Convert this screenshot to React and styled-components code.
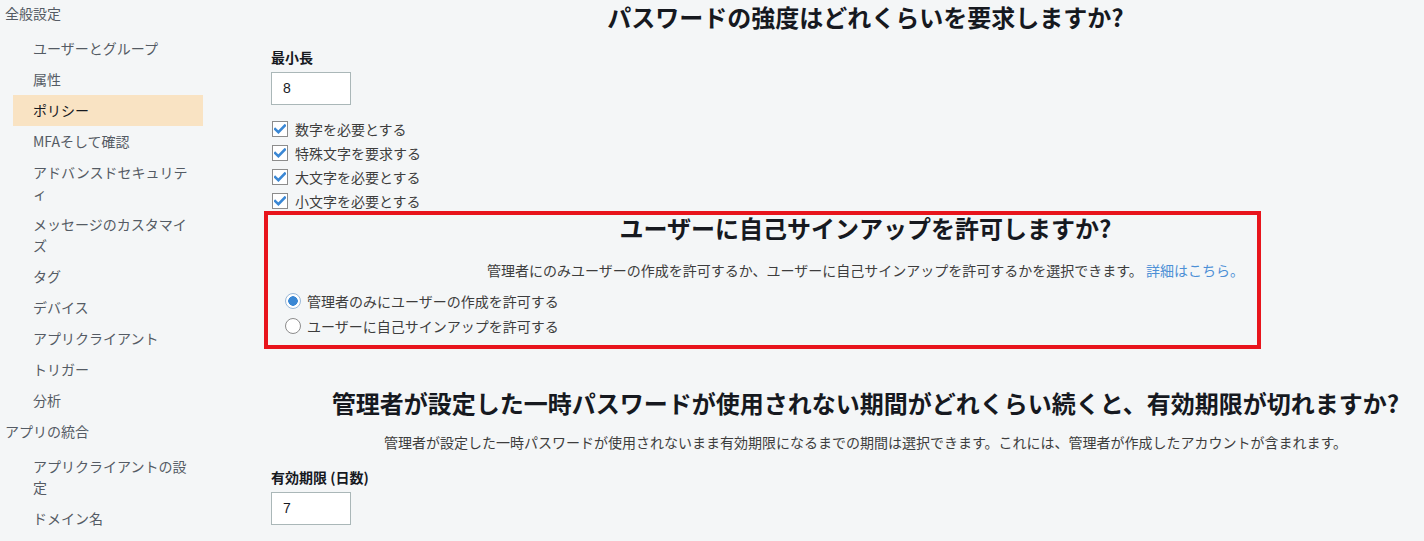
import styled, { createGlobalStyle } from 'styled-components';

const GlobalStyle = createGlobalStyle`
  html, body {
    margin: 0;
    padding: 0;
    background: #f4f6f7;
    overflow: hidden;
  }
  body {
    font-family: "Noto Sans CJK JP", "Noto Sans", sans-serif;
    color: #333;
  }
`;

const navGroups = [
  {
    title: '全般設定',
    items: ['ユーザーとグループ', '属性', 'ポリシー', 'MFAそして確認', 'アドバンスドセキュリティ', 'メッセージのカスタマイズ', 'タグ', 'デバイス', 'アプリクライアント', 'トリガー', '分析'],
  },
  {
    title: 'アプリの統合',
    items: ['アプリクライアントの設定', 'ドメイン名'],
  },
];

const checks = ['数字を必要とする', '特殊文字を要求する', '大文字を必要とする', '小文字を必要とする'];

const Check = () => (
  <svg width="12" height="10" viewBox="0 0 12 10">
    <path d="M1.2 5.2 L4.4 8.2 L10.8 1.6" fill="none" stroke="#3a87d4" strokeWidth="2.6" strokeLinecap="square" />
  </svg>
);

const App = () => {
  return (
    <Page>
      <GlobalStyle />
      <Sidebar>
        {navGroups.map(group => (
          <div key={group.title}>
            <GroupTitle>{group.title}</GroupTitle>
            <NavList>
              {group.items.map(item => (
                <NavItem key={item} active={item === 'ポリシー'}>{item}</NavItem>
              ))}
            </NavList>
          </div>
        ))}
      </Sidebar>

      <Main>
        <Heading>パスワードの強度はどれくらいを要求しますか?</Heading>
        <Label top="13px">最小長</Label>
        <NumberBox>8</NumberBox>
        <CheckList>
          {checks.map(c => (
            <OptionRow key={c}>
              <CheckBox><Check /></CheckBox>
              {c}
            </OptionRow>
          ))}
        </CheckList>

        <Section>
          <Highlight />
          <Heading lineHeight="30px">ユーザーに自己サインアップを許可しますか?</Heading>
          <Description top="17px">
            管理者にのみユーザーの作成を許可するか、ユーザーに自己サインアップを許可するかを選択できます。 <Link>詳細はこちら。</Link>
          </Description>
          <RadioList>
            <OptionRow height="25px" gap="6px">
              <Radio checked />
              管理者のみにユーザーの作成を許可する
            </OptionRow>
            <OptionRow height="25px" gap="6px">
              <Radio />
              ユーザーに自己サインアップを許可する
            </OptionRow>
          </RadioList>
        </Section>

        <Heading top="47px">管理者が設定した一時パスワードが使用されない期間がどれくらい続くと、有効期限が切れますか?</Heading>
        <Description top="12px">
          管理者が設定した一時パスワードが使用されないまま有効期限になるまでの期間は選択できます。これには、管理者が作成したアカウントが含まれます。
        </Description>
        <Label top="15px">有効期限 (日数)</Label>
        <NumberBox>7</NumberBox>
      </Main>
    </Page>
  );
};

export default App;

const Page = styled.div`
  display: flex;
  width: 1424px;
  height: 541px;
  overflow: hidden;
`;

const Sidebar = styled.nav`
  flex: 0 0 203px;
  padding-left: 5px;
  box-sizing: border-box;
`;

const GroupTitle = styled.div`
  font-size: 14px;
  line-height: 22px;
  padding: 2px 0 4.5px;
  color: #545b64;
`;

const NavList = styled.div`
  padding: 4px 0 2.5px 8px;
`;

const NavItem = styled.div`
  width: 190px;
  box-sizing: border-box;
  padding: 5px 12px 5px 20px;
  font-size: 14px;
  line-height: 21px;
  color: ${props => (props.active ? '#16191f' : '#545b64')};
  background: ${props => (props.active ? '#f9e3c3' : 'transparent')};
`;

const Main = styled.main`
  flex: 1;
  padding-left: 68px;
  display: flex;
  flex-direction: column;
  align-items: flex-start;
`;

const Heading = styled.h2`
  align-self: stretch;
  margin: ${props => props.top || '0'} 0 0;
  padding-left: 36px;
  text-align: center;
  white-space: nowrap;
  font-size: 24px;
  font-weight: bold;
  line-height: ${props => props.lineHeight || '34px'};
  color: #16191f;
`;

const Label = styled.div`
  margin-top: ${props => props.top};
  font-size: 14px;
  font-weight: bold;
  line-height: 20px;
  color: #16191f;
`;

const NumberBox = styled.div`
  margin-top: 5px;
  width: 80px;
  height: 33px;
  box-sizing: border-box;
  border: 1px solid #aab7b8;
  background: #fff;
  padding-left: 11px;
  font-family: "Liberation Sans", Arial, sans-serif;
  font-size: 14px;
  line-height: 31px;
  color: #16191f;
`;

const CheckList = styled.div`
  margin-top: 12px;
`;

const OptionRow = styled.div`
  display: flex;
  align-items: center;
  gap: ${props => props.gap || '7px'};
  height: ${props => props.height || '24px'};
  font-size: 14px;
  color: #3d3d3d;
  white-space: nowrap;
`;

const CheckBox = styled.span`
  width: 16px;
  height: 16px;
  box-sizing: border-box;
  border: 1px solid #8c8c8c;
  background: #fff;
  display: flex;
  align-items: center;
  justify-content: center;
  margin-left: 1px;
`;

const Section = styled.section`
  position: relative;
  align-self: stretch;
`;

const Highlight = styled.div`
  position: absolute;
  left: -7px;
  top: -2px;
  width: 997px;
  bottom: -10.5px;
  border: 4px solid #e8141c;
  box-sizing: border-box;
  pointer-events: none;
`;

const Description = styled.p`
  align-self: stretch;
  margin: ${props => props.top || '0'} 0 0;
  padding-left: 36px;
  text-align: center;
  white-space: nowrap;
  font-size: 14px;
  line-height: 20px;
  color: #3d3d3d;
`;

const Link = styled.span`
  color: #4d90d6;
`;

const RadioList = styled.div`
  margin-top: 8.5px;
  padding-left: 14px;
`;

const Radio = styled.span`
  width: 16px;
  height: 16px;
  box-sizing: border-box;
  border-radius: 50%;
  border: 1px solid ${props => (props.checked ? '#9ab8d8' : '#8c8c8c')};
  background: ${props => (props.checked ? 'radial-gradient(circle, #3a87d4 0 4.5px, #fff 5px)' : '#fff')};
`;
